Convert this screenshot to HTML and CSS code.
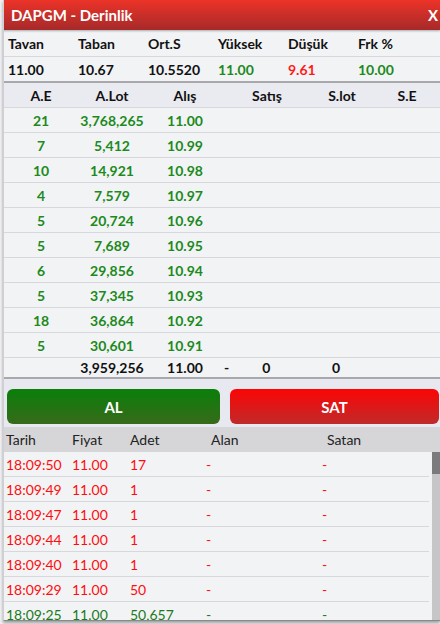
FILE: index.html
```html
<!DOCTYPE html>
<html lang="tr">
<head>
  <meta charset="UTF-8" />
  <meta name="viewport" content="width=device-width, initial-scale=1.0" />
  <title>DAPGM - Derinlik</title>
  <link rel="stylesheet" href="styles.css">
</head>
<body>
  <div class="window">
    <div class="title-bar">
      <span class="title">DAPGM - Derinlik</span>
      <span class="close">X</span>
    </div>

    <div class="stats">
      <div class="stats-row labels">
        <span>Tavan</span><span>Taban</span><span>Ort.S</span><span>Yüksek</span><span>Düşük</span><span>Frk %</span>
      </div>
      <div class="stats-row values">
        <span>11.00</span><span>10.67</span><span>10.5520</span><span class="up">11.00</span><span class="down">9.61</span><span class="up">10.00</span>
      </div>
    </div>

    <div class="depth">
      <div class="depth-row depth-head">
        <span>A.E</span><span>A.Lot</span><span>Alış</span><span>Satış</span><span>S.lot</span><span>S.E</span>
      </div>
      <div id="depthRows"></div>
      <div class="depth-row depth-total">
        <span></span><span>3,959,256</span><span>11.00</span>
        <span class="sell-total"><span>-</span><span class="zero">0</span></span>
        <span class="zero-lot">0</span><span></span>
      </div>
    </div>

    <div class="actions">
      <button class="btn buy">AL</button>
      <button class="btn sell">SAT</button>
    </div>

    <div class="trades">
      <div class="trade-row trade-head">
        <span>Tarih</span><span>Fiyat</span><span>Adet</span><span class="shift">Alan</span><span class="shift">Satan</span>
      </div>
      <div class="trade-body">
        <div class="trade-list" id="tradeRows"></div>
        <div class="scrollbar"><div class="thumb"></div></div>
      </div>
    </div>
  </div>

  <script>
    const bids = [
      ['21', '3,768,265', '11.00'],
      ['7', '5,412', '10.99'],
      ['10', '14,921', '10.98'],
      ['4', '7,579', '10.97'],
      ['5', '20,724', '10.96'],
      ['5', '7,689', '10.95'],
      ['6', '29,856', '10.94'],
      ['5', '37,345', '10.93'],
      ['18', '36,864', '10.92'],
      ['5', '30,601', '10.91']
    ];

    const trades = [
      ['18:09:50', '11.00', '17', 'down'],
      ['18:09:49', '11.00', '1', 'down'],
      ['18:09:47', '11.00', '1', 'down'],
      ['18:09:44', '11.00', '1', 'down'],
      ['18:09:40', '11.00', '1', 'down'],
      ['18:09:29', '11.00', '50', 'down'],
      ['18:09:25', '11.00', '50,657', 'up']
    ];

    const depthRows = document.getElementById('depthRows');
    bids.forEach(([count, lot, price]) => {
      const row = document.createElement('div');
      row.className = 'depth-row bid';
      row.innerHTML = `<span>${count}</span><span>${lot}</span><span>${price}</span><span></span><span></span><span></span>`;
      depthRows.appendChild(row);
    });

    const tradeRows = document.getElementById('tradeRows');
    trades.forEach(([time, price, qty, dir]) => {
      const row = document.createElement('div');
      row.className = 'trade-row ' + dir;
      row.innerHTML = `<span>${time}</span><span>${price}</span><span>${qty}</span><span>-</span><span>-</span>`;
      tradeRows.appendChild(row);
    });
  </script>
</body>
</html>
```

FILE: styles.css
```css
html, body {
  height: 100%;
}
body {
  margin: 0;
  font-family: Lato, "Open Sans", Arial, sans-serif;
  font-size: 14px;
  color: #111;
  background-color: #f1f1f3;
  overflow: hidden;
}
.window {
  margin-left: 3px;
  height: 620px;
  display: flex;
  flex-direction: column;
  border-left: 1px solid #cfcfd4;
  border-bottom: 1px solid #8a8a8a;
  box-shadow: 0 2px 3px rgba(0, 0, 0, 0.35);
  background-color: #f2f3f5;
  overflow: hidden;
}
.title-bar {
  height: 30px;
  margin-left: -1px;
  display: flex;
  align-items: center;
  justify-content: space-between;
  padding: 0 2px 0 8px;
  background: linear-gradient(#ec3328, #a62a2a);
  color: #fff;
  font-weight: bold;
  font-size: 15px;
  box-shadow: 0 1px 2px rgba(0, 0, 0, 0.3);
}
.stats-row {
  display: grid;
  grid-template-columns: repeat(6, 70px);
  padding-left: 4px;
  font-weight: bold;
}
.stats-row.labels {
  height: 26px;
  align-items: center;
  border-bottom: 1px solid #d8d8dc;
}
.stats-row.values {
  height: 24px;
  align-items: center;
  border-bottom: 2px solid #a9a9ad;
}
.up {
  color: #1c8a1c;
}
.down {
  color: #ff1a1a;
}
.depth-row {
  display: grid;
  grid-template-columns: 74px 68px 78px 86px 64px 66px;
  align-items: center;
  text-align: center;
  font-weight: bold;
  height: 24px;
  border-bottom: 1px solid #d8d8dc;
}
.depth-head {
  background-color: #eaeaf1;
}
.bid {
  color: #1c8a1c;
}
.depth-total {
  height: 19px;
  border-bottom: 2px solid #a9a9ad;
}
.sell-total {
  display: flex;
  gap: 33px;
  text-align: left;
}
.zero-lot {
  padding-right: 12px;
}
.actions {
  display: flex;
  gap: 10px;
  padding: 10px 0 3px 3px;
  background-color: #e8e8f1;
}
.btn {
  height: 35px;
  border: none;
  border-radius: 6px;
  color: #fff;
  font-family: inherit;
  font-size: 15px;
  font-weight: bold;
}
.btn.buy {
  width: 213px;
  background: linear-gradient(#0a7f0a, #376a1a);
}
.btn.sell {
  width: 209px;
  background: linear-gradient(#fb0505, #c02a2a);
}
.trades {
  flex: 1;
  display: flex;
  flex-direction: column;
  min-height: 0;
}
.trade-row {
  display: grid;
  grid-template-columns: 66px 58px 76px 116px 1fr;
  align-items: center;
  height: 24px;
  padding-left: 2px;
}
.trade-head {
  height: 25px;
  background-color: #d6d6d8;
  color: #222;
}
.trade-head .shift {
  padding-left: 5px;
}
.trade-body {
  flex: 1;
  display: flex;
  min-height: 0;
}
.trade-list {
  flex: 1;
}
.trade-list .trade-row {
  border-bottom: 1px solid #d8d8dc;
}
.trade-row.down {
  color: #ff0d0d;
}
.trade-row.up {
  color: #1c7a1c;
}
.scrollbar {
  width: 8px;
  margin-left: 3px;
  background-color: #c6c6c8;
}
.thumb {
  height: 22px;
  background-color: #7b7b7d;
}
```
